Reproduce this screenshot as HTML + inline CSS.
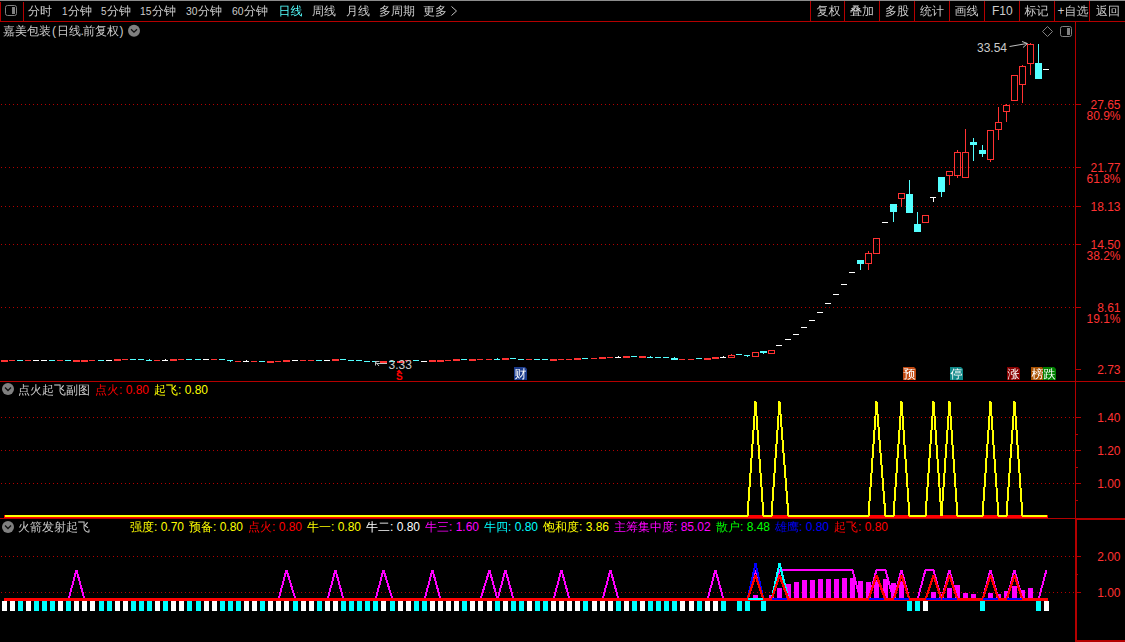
<!DOCTYPE html>
<html lang="zh-CN"><head><meta charset="utf-8"><title>嘉美包装</title>
<style>
html,body{margin:0;padding:0;background:#000;}
body{width:1125px;height:642px;overflow:hidden;}
svg{display:block;}
.t{font-family:"Liberation Sans","WenQuanYi Zen Hei","Noto Sans CJK SC",sans-serif;}
.n{font-family:"Liberation Sans",sans-serif;}
</style></head><body>
<svg width="1125" height="642" viewBox="0 0 1125 642" shape-rendering="crispEdges">
<rect x="0" y="0" width="1125" height="1" fill="#8c8c8c"/>
<rect x="0" y="21" width="1125" height="1" fill="#b40000"/>
<rect x="0" y="2" width="1" height="20" fill="#b40000"/>
<rect x="23" y="2" width="1" height="20" fill="#b40000"/>
<rect x="810" y="1" width="1" height="21" fill="#b40000"/>
<rect x="844" y="1" width="1" height="21" fill="#b40000"/>
<rect x="879" y="1" width="1" height="21" fill="#b40000"/>
<rect x="914" y="1" width="1" height="21" fill="#b40000"/>
<rect x="949" y="1" width="1" height="21" fill="#b40000"/>
<rect x="984" y="1" width="1" height="21" fill="#b40000"/>
<rect x="1019" y="1" width="1" height="21" fill="#b40000"/>
<rect x="1054" y="1" width="1" height="21" fill="#b40000"/>
<rect x="1089" y="1" width="1" height="21" fill="#b40000"/>
<rect x="1075" y="22" width="1" height="497" fill="#b40000"/>
<rect x="0" y="381" width="1125" height="1" fill="#b40000"/>
<rect x="0" y="518" width="1076" height="1" fill="#b40000"/>
<rect x="1075" y="518" width="50" height="2" fill="#b40000"/>
<rect x="1075" y="519" width="2" height="123" fill="#b40000"/>
<rect x="1075" y="640" width="50" height="2" fill="#b40000"/>
<path d="M1 104.5H1074" stroke="#b40000" stroke-width="1" stroke-dasharray="1 3" fill="none"/>
<path d="M1 167.5H1074" stroke="#b40000" stroke-width="1" stroke-dasharray="1 3" fill="none"/>
<path d="M1 206.5H1074" stroke="#b40000" stroke-width="1" stroke-dasharray="1 3" fill="none"/>
<path d="M1 244.5H1074" stroke="#b40000" stroke-width="1" stroke-dasharray="1 3" fill="none"/>
<path d="M1 307.5H1074" stroke="#b40000" stroke-width="1" stroke-dasharray="1 3" fill="none"/>
<path d="M1 417.5H1074" stroke="#b40000" stroke-width="1" stroke-dasharray="1 3" fill="none"/>
<path d="M1 450.5H1074" stroke="#b40000" stroke-width="1" stroke-dasharray="1 3" fill="none"/>
<path d="M1 483.5H1074" stroke="#b40000" stroke-width="1" stroke-dasharray="1 3" fill="none"/>
<path d="M1 556.5H1074" stroke="#b40000" stroke-width="1" stroke-dasharray="1 3" fill="none"/>
<path d="M1 592.5H1074" stroke="#b40000" stroke-width="1" stroke-dasharray="1 3" fill="none"/>
<rect x="1076" y="104" width="5" height="1" fill="#b40000"/>
<rect x="1076" y="167" width="5" height="1" fill="#b40000"/>
<rect x="1076" y="206" width="5" height="1" fill="#b40000"/>
<rect x="1076" y="244" width="5" height="1" fill="#b40000"/>
<rect x="1076" y="307" width="5" height="1" fill="#b40000"/>
<rect x="1076" y="369" width="5" height="1" fill="#b40000"/>
<rect x="1076" y="417" width="5" height="1" fill="#b40000"/>
<rect x="1076" y="450" width="5" height="1" fill="#b40000"/>
<rect x="1076" y="483" width="5" height="1" fill="#b40000"/>
<rect x="1076" y="434" width="2" height="1" fill="#b40000"/>
<rect x="1076" y="467" width="2" height="1" fill="#b40000"/>
<rect x="1076" y="500" width="2" height="1" fill="#b40000"/>
<rect x="1077" y="556" width="4" height="1" fill="#b40000"/>
<rect x="1077" y="592" width="4" height="1" fill="#b40000"/>
<rect x="1077" y="574" width="1" height="1" fill="#b40000"/>
<rect x="1" y="360" width="7" height="2" fill="#ff3232"/>
<rect x="9" y="360" width="6" height="1" fill="#ff3232"/>
<rect x="17" y="360" width="6" height="1" fill="#54ffff"/>
<rect x="25" y="360" width="6" height="1" fill="#ff3232"/>
<rect x="33" y="360" width="6" height="1" fill="#ffffff"/>
<rect x="41" y="360" width="6" height="1" fill="#ffffff"/>
<rect x="49" y="360" width="6" height="1" fill="#54ffff"/>
<rect x="57" y="360" width="6" height="1" fill="#ff3232"/>
<rect x="65" y="360" width="6" height="1" fill="#54ffff"/>
<rect x="73" y="360" width="7" height="2" fill="#ff3232"/>
<rect x="81" y="360" width="7" height="2" fill="#ff3232"/>
<rect x="89" y="360" width="6" height="1" fill="#ff3232"/>
<rect x="98" y="360" width="6" height="1" fill="#54ffff"/>
<rect x="106" y="360" width="6" height="1" fill="#ffffff"/>
<rect x="114" y="359" width="7" height="2" fill="#ff3232"/>
<rect x="122" y="359" width="6" height="1" fill="#ff3232"/>
<rect x="130" y="359" width="6" height="1" fill="#54ffff"/>
<rect x="138" y="359" width="6" height="1" fill="#54ffff"/>
<rect x="146" y="360" width="6" height="1" fill="#54ffff"/>
<rect x="149" y="359" width="1" height="1" fill="#54ffff"/>
<rect x="154" y="360" width="6" height="1" fill="#ff3232"/>
<rect x="162" y="360" width="6" height="1" fill="#ffffff"/>
<rect x="165" y="359" width="1" height="1" fill="#ffffff"/>
<rect x="170" y="359" width="7" height="2" fill="#ff3232"/>
<rect x="178" y="359" width="6" height="1" fill="#ff3232"/>
<rect x="186" y="359" width="6" height="1" fill="#54ffff"/>
<rect x="195" y="359" width="6" height="1" fill="#54ffff"/>
<rect x="203" y="359" width="6" height="1" fill="#ffffff"/>
<rect x="211" y="359" width="6" height="1" fill="#ff3232"/>
<rect x="219" y="359" width="6" height="1" fill="#54ffff"/>
<rect x="227" y="360" width="6" height="1" fill="#54ffff"/>
<rect x="230" y="361" width="1" height="1" fill="#54ffff"/>
<rect x="235" y="361" width="6" height="1" fill="#ff3232"/>
<rect x="243" y="361" width="6" height="1" fill="#ffffff"/>
<rect x="246" y="360" width="1" height="1" fill="#ffffff"/>
<rect x="251" y="361" width="6" height="1" fill="#ff3232"/>
<rect x="259" y="361" width="6" height="1" fill="#54ffff"/>
<rect x="267" y="361" width="7" height="2" fill="#ff3232"/>
<rect x="275" y="361" width="6" height="1" fill="#ff3232"/>
<rect x="283" y="360" width="7" height="2" fill="#ff3232"/>
<rect x="292" y="360" width="6" height="1" fill="#ffffff"/>
<rect x="300" y="360" width="6" height="1" fill="#ff3232"/>
<rect x="308" y="360" width="6" height="1" fill="#ff3232"/>
<rect x="316" y="360" width="6" height="1" fill="#54ffff"/>
<rect x="324" y="360" width="6" height="1" fill="#ffffff"/>
<rect x="332" y="359" width="7" height="2" fill="#ff3232"/>
<rect x="340" y="359" width="6" height="1" fill="#54ffff"/>
<rect x="348" y="360" width="6" height="1" fill="#54ffff"/>
<rect x="356" y="360" width="6" height="1" fill="#54ffff"/>
<rect x="364" y="361" width="6" height="1" fill="#54ffff"/>
<rect x="372" y="361" width="6" height="1" fill="#54ffff"/>
<rect x="380" y="361" width="7" height="2" fill="#ff3232"/>
<rect x="389" y="361" width="6" height="1" fill="#54ffff"/>
<rect x="397" y="361" width="7" height="2" fill="#ff3232"/>
<rect x="405" y="360" width="6" height="1" fill="#ff3232"/>
<rect x="413" y="360" width="6" height="1" fill="#54ffff"/>
<rect x="421" y="361" width="6" height="1" fill="#ffffff"/>
<rect x="429" y="360" width="7" height="2" fill="#ff3232"/>
<rect x="437" y="360" width="7" height="2" fill="#ff3232"/>
<rect x="445" y="360" width="6" height="1" fill="#ff3232"/>
<rect x="453" y="359" width="7" height="2" fill="#ff3232"/>
<rect x="461" y="359" width="6" height="1" fill="#54ffff"/>
<rect x="469" y="359" width="7" height="2" fill="#ff3232"/>
<rect x="477" y="359" width="6" height="1" fill="#ff3232"/>
<rect x="486" y="359" width="6" height="1" fill="#ff3232"/>
<rect x="494" y="359" width="6" height="1" fill="#54ffff"/>
<rect x="497" y="358" width="1" height="1" fill="#54ffff"/>
<rect x="502" y="358" width="7" height="2" fill="#ff3232"/>
<rect x="510" y="358" width="6" height="1" fill="#54ffff"/>
<rect x="518" y="359" width="6" height="1" fill="#54ffff"/>
<rect x="526" y="359" width="6" height="1" fill="#ff3232"/>
<rect x="534" y="359" width="6" height="1" fill="#54ffff"/>
<rect x="542" y="359" width="6" height="1" fill="#54ffff"/>
<rect x="550" y="359" width="7" height="2" fill="#ff3232"/>
<rect x="558" y="359" width="6" height="1" fill="#ff3232"/>
<rect x="566" y="359" width="6" height="1" fill="#ff3232"/>
<rect x="574" y="358" width="7" height="2" fill="#ff3232"/>
<rect x="582" y="358" width="6" height="1" fill="#54ffff"/>
<rect x="591" y="358" width="6" height="1" fill="#ff3232"/>
<rect x="599" y="357" width="7" height="2" fill="#ff3232"/>
<rect x="607" y="357" width="6" height="1" fill="#ff3232"/>
<rect x="615" y="357" width="6" height="1" fill="#ffffff"/>
<rect x="618" y="356" width="1" height="1" fill="#ffffff"/>
<rect x="623" y="356" width="7" height="2" fill="#ff3232"/>
<rect x="631" y="356" width="6" height="1" fill="#54ffff"/>
<rect x="639" y="356" width="7" height="2" fill="#ff3232"/>
<rect x="647" y="357" width="6" height="1" fill="#54ffff"/>
<rect x="650" y="356" width="1" height="1" fill="#54ffff"/>
<rect x="655" y="357" width="6" height="1" fill="#54ffff"/>
<rect x="663" y="357" width="6" height="1" fill="#54ffff"/>
<rect x="671" y="358" width="7" height="2" fill="#54ffff"/>
<rect x="674" y="357" width="1" height="1" fill="#54ffff"/>
<rect x="679" y="359" width="6" height="1" fill="#ff3232"/>
<rect x="688" y="359" width="6" height="1" fill="#ff3232"/>
<rect x="696" y="358" width="6" height="1" fill="#54ffff"/>
<rect x="704" y="358" width="7" height="2" fill="#ff3232"/>
<rect x="712" y="357" width="7" height="2" fill="#ff3232"/>
<rect x="720" y="357" width="6" height="1" fill="#ffffff"/>
<rect x="723" y="356" width="1" height="1" fill="#ffffff"/>
<rect x="736" y="354" width="6" height="1" fill="#54ffff"/>
<rect x="744" y="355" width="6" height="1" fill="#54ffff"/>
<rect x="747" y="356" width="1" height="1" fill="#54ffff"/>
<rect x="760" y="351" width="7" height="2" fill="#54ffff"/>
<rect x="763" y="353" width="1" height="1" fill="#54ffff"/>
<rect x="776" y="345" width="6" height="1" fill="#ffffff"/>
<rect x="785" y="339" width="6" height="1" fill="#ffffff"/>
<rect x="793" y="334" width="6" height="1" fill="#ffffff"/>
<rect x="801" y="327" width="6" height="1" fill="#ffffff"/>
<rect x="809" y="320" width="6" height="1" fill="#ffffff"/>
<rect x="817" y="312" width="6" height="1" fill="#ffffff"/>
<rect x="825" y="303" width="6" height="1" fill="#ffffff"/>
<rect x="833" y="294" width="6" height="1" fill="#ffffff"/>
<rect x="841" y="284" width="6" height="1" fill="#ffffff"/>
<rect x="849" y="272" width="6" height="1" fill="#ffffff"/>
<rect x="882" y="222" width="6" height="1" fill="#ffffff"/>
<rect x="1043" y="69" width="6" height="1" fill="#ffffff"/>
<rect x="731" y="354" width="1" height="1" fill="#ff3232"/>
<rect x="728.5" y="355.5" width="6" height="2" fill="none" stroke="#ff3232" stroke-width="1"/>
<rect x="752.5" y="352.5" width="6" height="4" fill="none" stroke="#ff3232" stroke-width="1"/>
<rect x="768.5" y="350.5" width="6" height="3" fill="none" stroke="#ff3232" stroke-width="1"/>
<rect x="860" y="260" width="1" height="10" fill="#54ffff"/>
<rect x="857" y="260" width="7" height="4" fill="#54ffff"/>
<rect x="868" y="251" width="1" height="2" fill="#ff3232"/>
<rect x="868" y="264" width="1" height="6" fill="#ff3232"/>
<rect x="865.5" y="253.5" width="6" height="10" fill="none" stroke="#ff3232" stroke-width="1"/>
<rect x="873.5" y="238.5" width="6" height="15" fill="none" stroke="#ff3232" stroke-width="1"/>
<rect x="893" y="204" width="1" height="18" fill="#54ffff"/>
<rect x="890" y="204" width="7" height="8" fill="#54ffff"/>
<rect x="901" y="199" width="1" height="8" fill="#ff3232"/>
<rect x="898.5" y="193.5" width="6" height="5" fill="none" stroke="#ff3232" stroke-width="1"/>
<rect x="909" y="180" width="1" height="33" fill="#54ffff"/>
<rect x="906" y="194" width="7" height="19" fill="#54ffff"/>
<rect x="917" y="212" width="1" height="20" fill="#54ffff"/>
<rect x="914" y="224" width="7" height="8" fill="#54ffff"/>
<rect x="922.5" y="215.5" width="6" height="7" fill="none" stroke="#ff3232" stroke-width="1"/>
<rect x="941" y="177" width="1" height="20" fill="#54ffff"/>
<rect x="938" y="177" width="7" height="15" fill="#54ffff"/>
<rect x="949" y="176" width="1" height="9" fill="#ff3232"/>
<rect x="946.5" y="171.5" width="6" height="4" fill="none" stroke="#ff3232" stroke-width="1"/>
<rect x="957" y="150" width="1" height="2" fill="#ff3232"/>
<rect x="957" y="176" width="1" height="2" fill="#ff3232"/>
<rect x="954.5" y="152.5" width="6" height="23" fill="none" stroke="#ff3232" stroke-width="1"/>
<rect x="965" y="129" width="1" height="23" fill="#ff3232"/>
<rect x="962.5" y="152.5" width="6" height="25" fill="none" stroke="#ff3232" stroke-width="1"/>
<rect x="973" y="138" width="1" height="23" fill="#54ffff"/>
<rect x="970" y="142" width="7" height="3" fill="#54ffff"/>
<rect x="982" y="145" width="1" height="12" fill="#54ffff"/>
<rect x="979" y="150" width="7" height="4" fill="#54ffff"/>
<rect x="990" y="160" width="1" height="2" fill="#ff3232"/>
<rect x="987.5" y="130.5" width="6" height="29" fill="none" stroke="#ff3232" stroke-width="1"/>
<rect x="998" y="107" width="1" height="15" fill="#ff3232"/>
<rect x="998" y="130" width="1" height="10" fill="#ff3232"/>
<rect x="995.5" y="122.5" width="6" height="7" fill="none" stroke="#ff3232" stroke-width="1"/>
<rect x="1006" y="104" width="1" height="1" fill="#ff3232"/>
<rect x="1006" y="112" width="1" height="10" fill="#ff3232"/>
<rect x="1003.5" y="105.5" width="6" height="6" fill="none" stroke="#ff3232" stroke-width="1"/>
<rect x="1011.5" y="75.5" width="6" height="25" fill="none" stroke="#ff3232" stroke-width="1"/>
<rect x="1022" y="65" width="1" height="1" fill="#ff3232"/>
<rect x="1022" y="85" width="1" height="18" fill="#ff3232"/>
<rect x="1019.5" y="66.5" width="6" height="18" fill="none" stroke="#ff3232" stroke-width="1"/>
<rect x="1030" y="43" width="1" height="1" fill="#ff3232"/>
<rect x="1030" y="64" width="1" height="11" fill="#ff3232"/>
<rect x="1027.5" y="44.5" width="6" height="19" fill="none" stroke="#ff3232" stroke-width="1"/>
<rect x="1038" y="44" width="1" height="35" fill="#54ffff"/>
<rect x="1035" y="63" width="7" height="16" fill="#54ffff"/>
<rect x="930" y="197" width="6" height="1" fill="#ffffff"/>
<rect x="933" y="197" width="1" height="5" fill="#ffffff"/>
<rect x="4" y="515" width="1044" height="3" fill="#ff0000"/>
<path d="M4.5 516 L12.5 516 L20.5 516 L28.5 516 L36.5 516 L44.5 516 L52.5 516 L60.5 516 L68.5 516 L76.5 516 L84.5 516 L92.5 516 L101.5 516 L109.5 516 L117.5 516 L125.5 516 L133.5 516 L141.5 516 L149.5 516 L157.5 516 L165.5 516 L173.5 516 L181.5 516 L189.5 516 L198.5 516 L206.5 516 L214.5 516 L222.5 516 L230.5 516 L238.5 516 L246.5 516 L254.5 516 L262.5 516 L270.5 516 L278.5 516 L286.5 516 L295.5 516 L303.5 516 L311.5 516 L319.5 516 L327.5 516 L335.5 516 L343.5 516 L351.5 516 L359.5 516 L367.5 516 L375.5 516 L383.5 516 L392.5 516 L400.5 516 L408.5 516 L416.5 516 L424.5 516 L432.5 516 L440.5 516 L448.5 516 L456.5 516 L464.5 516 L472.5 516 L480.5 516 L489.5 516 L497.5 516 L505.5 516 L513.5 516 L521.5 516 L529.5 516 L537.5 516 L545.5 516 L553.5 516 L561.5 516 L569.5 516 L577.5 516 L585.5 516 L594.5 516 L602.5 516 L610.5 516 L618.5 516 L626.5 516 L634.5 516 L642.5 516 L650.5 516 L658.5 516 L666.5 516 L674.5 516 L682.5 516 L691.5 516 L699.5 516 L707.5 516 L715.5 516 L723.5 516 L731.5 516 L739.5 516 L747.5 516 L755.5 401.5 L763.5 516 L771.5 516 L779.5 401.5 L788.5 516 L796.5 516 L804.5 516 L812.5 516 L820.5 516 L828.5 516 L836.5 516 L844.5 516 L852.5 516 L860.5 516 L868.5 516 L876.5 401.5 L885.5 516 L893.5 516 L901.5 401.5 L909.5 516 L917.5 516 L925.5 516 L933.5 401.5 L941.5 516 L949.5 401.5 L957.5 516 L965.5 516 L973.5 516 L982.5 516 L990.5 401.5 L998.5 516 L1006.5 516 L1014.5 401.5 L1022.5 516 L1030.5 516 L1038.5 516 L1046.5 516" stroke="#ffff00" stroke-width="2" fill="none" stroke-linejoin="miter" shape-rendering="crispEdges"/>
<rect x="2" y="601" width="5" height="10" fill="#ffffff"/>
<rect x="10" y="601" width="5" height="10" fill="#ffffff"/>
<rect x="18" y="601" width="5" height="10" fill="#00ffff"/>
<rect x="26" y="601" width="5" height="10" fill="#ffffff"/>
<rect x="34" y="601" width="5" height="10" fill="#00ffff"/>
<rect x="42" y="601" width="5" height="10" fill="#00ffff"/>
<rect x="50" y="601" width="5" height="10" fill="#00ffff"/>
<rect x="58" y="601" width="5" height="10" fill="#ffffff"/>
<rect x="66" y="601" width="5" height="10" fill="#00ffff"/>
<rect x="74" y="601" width="5" height="10" fill="#ffffff"/>
<rect x="82" y="601" width="5" height="10" fill="#ffffff"/>
<rect x="90" y="601" width="5" height="10" fill="#ffffff"/>
<rect x="99" y="601" width="5" height="10" fill="#00ffff"/>
<rect x="107" y="601" width="5" height="10" fill="#00ffff"/>
<rect x="115" y="601" width="5" height="10" fill="#ffffff"/>
<rect x="123" y="601" width="5" height="10" fill="#ffffff"/>
<rect x="131" y="601" width="5" height="10" fill="#00ffff"/>
<rect x="139" y="601" width="5" height="10" fill="#00ffff"/>
<rect x="147" y="601" width="5" height="10" fill="#00ffff"/>
<rect x="155" y="601" width="5" height="10" fill="#ffffff"/>
<rect x="163" y="601" width="5" height="10" fill="#00ffff"/>
<rect x="171" y="601" width="5" height="10" fill="#ffffff"/>
<rect x="179" y="601" width="5" height="10" fill="#ffffff"/>
<rect x="187" y="601" width="5" height="10" fill="#00ffff"/>
<rect x="196" y="601" width="5" height="10" fill="#00ffff"/>
<rect x="204" y="601" width="5" height="10" fill="#ffffff"/>
<rect x="212" y="601" width="5" height="10" fill="#ffffff"/>
<rect x="220" y="601" width="5" height="10" fill="#00ffff"/>
<rect x="228" y="601" width="5" height="10" fill="#00ffff"/>
<rect x="236" y="601" width="5" height="10" fill="#00ffff"/>
<rect x="244" y="601" width="5" height="10" fill="#ffffff"/>
<rect x="252" y="601" width="5" height="10" fill="#ffffff"/>
<rect x="260" y="601" width="5" height="10" fill="#00ffff"/>
<rect x="268" y="601" width="5" height="10" fill="#ffffff"/>
<rect x="276" y="601" width="5" height="10" fill="#ffffff"/>
<rect x="284" y="601" width="5" height="10" fill="#ffffff"/>
<rect x="293" y="601" width="5" height="10" fill="#00ffff"/>
<rect x="301" y="601" width="5" height="10" fill="#ffffff"/>
<rect x="309" y="601" width="5" height="10" fill="#ffffff"/>
<rect x="317" y="601" width="5" height="10" fill="#00ffff"/>
<rect x="325" y="601" width="5" height="10" fill="#ffffff"/>
<rect x="333" y="601" width="5" height="10" fill="#ffffff"/>
<rect x="341" y="601" width="5" height="10" fill="#00ffff"/>
<rect x="349" y="601" width="5" height="10" fill="#00ffff"/>
<rect x="357" y="601" width="5" height="10" fill="#00ffff"/>
<rect x="365" y="601" width="5" height="10" fill="#00ffff"/>
<rect x="373" y="601" width="5" height="10" fill="#00ffff"/>
<rect x="381" y="601" width="5" height="10" fill="#ffffff"/>
<rect x="390" y="601" width="5" height="10" fill="#00ffff"/>
<rect x="398" y="601" width="5" height="10" fill="#ffffff"/>
<rect x="406" y="601" width="5" height="10" fill="#ffffff"/>
<rect x="414" y="601" width="5" height="10" fill="#00ffff"/>
<rect x="422" y="601" width="5" height="10" fill="#00ffff"/>
<rect x="430" y="601" width="5" height="10" fill="#ffffff"/>
<rect x="438" y="601" width="5" height="10" fill="#ffffff"/>
<rect x="446" y="601" width="5" height="10" fill="#ffffff"/>
<rect x="454" y="601" width="5" height="10" fill="#ffffff"/>
<rect x="462" y="601" width="5" height="10" fill="#00ffff"/>
<rect x="470" y="601" width="5" height="10" fill="#ffffff"/>
<rect x="478" y="601" width="5" height="10" fill="#ffffff"/>
<rect x="487" y="601" width="5" height="10" fill="#ffffff"/>
<rect x="495" y="601" width="5" height="10" fill="#00ffff"/>
<rect x="503" y="601" width="5" height="10" fill="#ffffff"/>
<rect x="511" y="601" width="5" height="10" fill="#00ffff"/>
<rect x="519" y="601" width="5" height="10" fill="#00ffff"/>
<rect x="527" y="601" width="5" height="10" fill="#ffffff"/>
<rect x="535" y="601" width="5" height="10" fill="#00ffff"/>
<rect x="543" y="601" width="5" height="10" fill="#00ffff"/>
<rect x="551" y="601" width="5" height="10" fill="#ffffff"/>
<rect x="559" y="601" width="5" height="10" fill="#ffffff"/>
<rect x="567" y="601" width="5" height="10" fill="#ffffff"/>
<rect x="575" y="601" width="5" height="10" fill="#ffffff"/>
<rect x="583" y="601" width="5" height="10" fill="#00ffff"/>
<rect x="592" y="601" width="5" height="10" fill="#ffffff"/>
<rect x="600" y="601" width="5" height="10" fill="#ffffff"/>
<rect x="608" y="601" width="5" height="10" fill="#ffffff"/>
<rect x="616" y="601" width="5" height="10" fill="#00ffff"/>
<rect x="624" y="601" width="5" height="10" fill="#ffffff"/>
<rect x="632" y="601" width="5" height="10" fill="#00ffff"/>
<rect x="640" y="601" width="5" height="10" fill="#ffffff"/>
<rect x="648" y="601" width="5" height="10" fill="#00ffff"/>
<rect x="656" y="601" width="5" height="10" fill="#00ffff"/>
<rect x="664" y="601" width="5" height="10" fill="#00ffff"/>
<rect x="672" y="601" width="5" height="10" fill="#00ffff"/>
<rect x="680" y="601" width="5" height="10" fill="#ffffff"/>
<rect x="689" y="601" width="5" height="10" fill="#ffffff"/>
<rect x="697" y="601" width="5" height="10" fill="#00ffff"/>
<rect x="705" y="601" width="5" height="10" fill="#ffffff"/>
<rect x="713" y="601" width="5" height="10" fill="#ffffff"/>
<rect x="721" y="601" width="5" height="10" fill="#00ffff"/>
<rect x="737" y="601" width="5" height="10" fill="#00ffff"/>
<rect x="745" y="601" width="5" height="10" fill="#00ffff"/>
<rect x="761" y="601" width="5" height="10" fill="#00ffff"/>
<rect x="907" y="601" width="5" height="10" fill="#00ffff"/>
<rect x="915" y="601" width="5" height="10" fill="#00ffff"/>
<rect x="923" y="601" width="5" height="10" fill="#ffffff"/>
<rect x="980" y="601" width="5" height="10" fill="#00ffff"/>
<rect x="1036" y="601" width="5" height="10" fill="#00ffff"/>
<rect x="1044" y="601" width="5" height="10" fill="#ffffff"/>
<rect x="753" y="595" width="5" height="4" fill="#ff00ff"/>
<rect x="769" y="595" width="5" height="4" fill="#ff00ff"/>
<rect x="777" y="588" width="5" height="11" fill="#ff00ff"/>
<rect x="786" y="584" width="5" height="15" fill="#ff00ff"/>
<rect x="794" y="582" width="5" height="17" fill="#ff00ff"/>
<rect x="802" y="580" width="5" height="19" fill="#ff00ff"/>
<rect x="810" y="580" width="5" height="19" fill="#ff00ff"/>
<rect x="818" y="579" width="5" height="20" fill="#ff00ff"/>
<rect x="826" y="579" width="5" height="20" fill="#ff00ff"/>
<rect x="834" y="579" width="5" height="20" fill="#ff00ff"/>
<rect x="842" y="578" width="5" height="21" fill="#ff00ff"/>
<rect x="850" y="578" width="5" height="21" fill="#ff00ff"/>
<rect x="858" y="581" width="5" height="18" fill="#ff00ff"/>
<rect x="866" y="582" width="5" height="17" fill="#ff00ff"/>
<rect x="874" y="580" width="5" height="19" fill="#ff00ff"/>
<rect x="883" y="579" width="5" height="20" fill="#ff00ff"/>
<rect x="891" y="583" width="5" height="16" fill="#ff00ff"/>
<rect x="899" y="581" width="5" height="18" fill="#ff00ff"/>
<rect x="931" y="592" width="5" height="7" fill="#ff00ff"/>
<rect x="939" y="594" width="5" height="5" fill="#ff00ff"/>
<rect x="947" y="588" width="5" height="11" fill="#ff00ff"/>
<rect x="955" y="585" width="5" height="14" fill="#ff00ff"/>
<rect x="963" y="593" width="5" height="6" fill="#ff00ff"/>
<rect x="971" y="594" width="5" height="5" fill="#ff00ff"/>
<rect x="988" y="593" width="5" height="6" fill="#ff00ff"/>
<rect x="996" y="594" width="5" height="5" fill="#ff00ff"/>
<rect x="1004" y="591" width="5" height="8" fill="#ff00ff"/>
<rect x="1012" y="586" width="5" height="13" fill="#ff00ff"/>
<rect x="1020" y="590" width="5" height="9" fill="#ff00ff"/>
<rect x="1028" y="588" width="5" height="11" fill="#ff00ff"/>
<path d="M4.5 599.5 L12.5 599.5 L20.5 599.5 L28.5 599.5 L36.5 599.5 L44.5 599.5 L52.5 599.5 L60.5 599.5 L68.5 599.5 L76.5 570.0 L84.5 599.5 L92.5 599.5 L101.5 599.5 L109.5 599.5 L117.5 599.5 L125.5 599.5 L133.5 599.5 L141.5 599.5 L149.5 599.5 L157.5 599.5 L165.5 599.5 L173.5 599.5 L181.5 599.5 L189.5 599.5 L198.5 599.5 L206.5 599.5 L214.5 599.5 L222.5 599.5 L230.5 599.5 L238.5 599.5 L246.5 599.5 L254.5 599.5 L262.5 599.5 L270.5 599.5 L278.5 599.5 L286.5 570.0 L295.5 599.5 L303.5 599.5 L311.5 599.5 L319.5 599.5 L327.5 599.5 L335.5 570.0 L343.5 599.5 L351.5 599.5 L359.5 599.5 L367.5 599.5 L375.5 599.5 L383.5 570.0 L392.5 599.5 L400.5 599.5 L408.5 599.5 L416.5 599.5 L424.5 599.5 L432.5 570.0 L440.5 599.5 L448.5 599.5 L456.5 599.5 L464.5 599.5 L472.5 599.5 L480.5 599.5 L489.5 570.0 L497.5 599.5 L505.5 570.0 L513.5 599.5 L521.5 599.5 L529.5 599.5 L537.5 599.5 L545.5 599.5 L553.5 599.5 L561.5 570.0 L569.5 599.5 L577.5 599.5 L585.5 599.5 L594.5 599.5 L602.5 599.5 L610.5 570.0 L618.5 599.5 L626.5 599.5 L634.5 599.5 L642.5 599.5 L650.5 599.5 L658.5 599.5 L666.5 599.5 L674.5 599.5 L682.5 599.5 L691.5 599.5 L699.5 599.5 L707.5 599.5 L715.5 570.0 L723.5 599.5 L731.5 599.5 L739.5 599.5 L747.5 599.5 L755.5 570.0 L763.5 599.5 L771.5 599.5 L779.5 570.0 L788.5 570.0 L796.5 570.0 L804.5 570.0 L812.5 570.0 L820.5 570.0 L828.5 570.0 L836.5 570.0 L844.5 570.0 L852.5 570.0 L860.5 599.5 L868.5 599.5 L876.5 570.0 L885.5 570.0 L893.5 599.5 L901.5 570.0 L909.5 599.5 L917.5 599.5 L925.5 570.0 L933.5 570.0 L941.5 599.5 L949.5 570.0 L957.5 599.5 L965.5 599.5 L973.5 599.5 L982.5 599.5 L990.5 570.0 L998.5 599.5 L1006.5 599.5 L1014.5 570.0 L1022.5 599.5 L1030.5 599.5 L1038.5 599.5 L1046.5 570.0" stroke="#ff00ff" stroke-width="2" fill="none" stroke-linejoin="bevel" shape-rendering="crispEdges"/>
<path d="M747.5 599.5 L755.5 563.5 L763.5 599.5" stroke="#0000ff" stroke-width="2" fill="none" stroke-linejoin="bevel" shape-rendering="crispEdges"/>
<path d="M771.5 599.5 L779.5 563.5 L788.5 599.5" stroke="#00ffff" stroke-width="2" fill="none" stroke-linejoin="bevel" shape-rendering="crispEdges"/>
<rect x="4" y="598" width="1044" height="3" fill="#ff0000"/>
<path d="M747.5 599.5 L755.5 575.5 L763.5 599.5" stroke="#ff0000" stroke-width="2.4" fill="none" stroke-linejoin="bevel" shape-rendering="crispEdges"/>
<path d="M771.5 599.5 L779.5 575.5 L788.5 599.5" stroke="#ff0000" stroke-width="2.4" fill="none" stroke-linejoin="bevel" shape-rendering="crispEdges"/>
<path d="M868.5 599.5 L876.5 575.5 L885.5 599.5" stroke="#ff0000" stroke-width="2.4" fill="none" stroke-linejoin="bevel" shape-rendering="crispEdges"/>
<path d="M893.5 599.5 L901.5 575.5 L909.5 599.5" stroke="#ff0000" stroke-width="2.4" fill="none" stroke-linejoin="bevel" shape-rendering="crispEdges"/>
<path d="M925.5 599.5 L933.5 575.5 L941.5 599.5" stroke="#ff0000" stroke-width="2.4" fill="none" stroke-linejoin="bevel" shape-rendering="crispEdges"/>
<path d="M941.5 599.5 L949.5 575.5 L957.5 599.5" stroke="#ff0000" stroke-width="2.4" fill="none" stroke-linejoin="bevel" shape-rendering="crispEdges"/>
<path d="M982.5 599.5 L990.5 575.5 L998.5 599.5" stroke="#ff0000" stroke-width="2.4" fill="none" stroke-linejoin="bevel" shape-rendering="crispEdges"/>
<path d="M1006.5 599.5 L1014.5 575.5 L1022.5 599.5" stroke="#ff0000" stroke-width="2.4" fill="none" stroke-linejoin="bevel" shape-rendering="crispEdges"/>
<rect x="748" y="598" width="15" height="2" fill="#00ffff"/>
<rect x="772" y="598" width="15" height="2" fill="#0000ff"/>
<rect x="869" y="598" width="15" height="2" fill="#0000ff"/>
<rect x="894" y="598" width="15" height="2" fill="#0000ff"/>
<rect x="926" y="598" width="15" height="2" fill="#0000ff"/>
<rect x="942" y="598" width="15" height="2" fill="#0000ff"/>
<rect x="983" y="598" width="15" height="2" fill="#0000ff"/>
<rect x="1007" y="598" width="15" height="2" fill="#0000ff"/>
<g shape-rendering="auto">
<text x="28" y="14.5" fill="#cccccc" font-size="12" text-anchor="start" class="t">分时</text>
<text x="62" y="14.5" fill="#cccccc" font-size="11" text-anchor="start" class="n" textLength="5.5" lengthAdjust="spacingAndGlyphs">1</text>
<text x="68" y="14.5" fill="#cccccc" font-size="12" text-anchor="start" class="t">分钟</text>
<text x="101" y="14.5" fill="#cccccc" font-size="11" text-anchor="start" class="n" textLength="5.5" lengthAdjust="spacingAndGlyphs">5</text>
<text x="107" y="14.5" fill="#cccccc" font-size="12" text-anchor="start" class="t">分钟</text>
<text x="140" y="14.5" fill="#cccccc" font-size="11" text-anchor="start" class="n" textLength="11.5" lengthAdjust="spacingAndGlyphs">15</text>
<text x="152" y="14.5" fill="#cccccc" font-size="12" text-anchor="start" class="t">分钟</text>
<text x="186" y="14.5" fill="#cccccc" font-size="11" text-anchor="start" class="n" textLength="11.5" lengthAdjust="spacingAndGlyphs">30</text>
<text x="198" y="14.5" fill="#cccccc" font-size="12" text-anchor="start" class="t">分钟</text>
<text x="232" y="14.5" fill="#cccccc" font-size="11" text-anchor="start" class="n" textLength="11.5" lengthAdjust="spacingAndGlyphs">60</text>
<text x="244" y="14.5" fill="#cccccc" font-size="12" text-anchor="start" class="t">分钟</text>
<text x="278.5" y="14.5" fill="#54ffff" font-size="12" text-anchor="start" class="t">日线</text>
<text x="312" y="14.5" fill="#cccccc" font-size="12" text-anchor="start" class="t">周线</text>
<text x="346" y="14.5" fill="#cccccc" font-size="12" text-anchor="start" class="t">月线</text>
<text x="379" y="14.5" fill="#cccccc" font-size="12" text-anchor="start" class="t">多周期</text>
<text x="423" y="14.5" fill="#cccccc" font-size="12" text-anchor="start" class="t">更多</text>
<path d="M451.5 6.5L456.5 11L451.5 15.5" stroke="#c0c0c0" fill="none" stroke-width="1"/>
<text x="816.5" y="14.5" fill="#cccccc" font-size="12" text-anchor="start" class="t">复权</text>
<text x="850" y="14.5" fill="#cccccc" font-size="12" text-anchor="start" class="t">叠加</text>
<text x="885" y="14.5" fill="#cccccc" font-size="12" text-anchor="start" class="t">多股</text>
<text x="920" y="14.5" fill="#cccccc" font-size="12" text-anchor="start" class="t">统计</text>
<text x="954.5" y="14.5" fill="#cccccc" font-size="12" text-anchor="start" class="t">画线</text>
<text x="992" y="14.5" fill="#cccccc" font-size="12" text-anchor="start" class="t">F10</text>
<text x="1024.5" y="14.5" fill="#cccccc" font-size="12" text-anchor="start" class="t">标记</text>
<text x="1057.5" y="14.5" fill="#cccccc" font-size="12" text-anchor="start" class="t">+自选</text>
<text x="1096" y="14.5" fill="#cccccc" font-size="12" text-anchor="start" class="t">返回</text>
<rect x="5.5" y="5.5" width="11" height="10" rx="2" fill="none" stroke="#808080"/>
<rect x="12" y="7" width="3" height="7" fill="#808080"/>
<rect x="1060.5" y="26.5" width="11" height="10" rx="2" fill="none" stroke="#808080"/>
<rect x="1067" y="28" width="3" height="7" fill="#808080"/>
<path d="M1047.5 26.5L1052.5 31.5L1047.5 36.5L1042.5 31.5Z" fill="none" stroke="#808080"/>
<circle cx="134" cy="30.7" r="6" fill="#808080"/>
<path d="M131 29.2L134 32.2L137 29.2" stroke="#101010" stroke-width="1.3" fill="none"/>
<circle cx="8" cy="389" r="6" fill="#808080"/>
<path d="M5 387.5L8 390.5L11 387.5" stroke="#101010" stroke-width="1.3" fill="none"/>
<circle cx="8" cy="527" r="6" fill="#808080"/>
<path d="M5 525.5L8 528.5L11 525.5" stroke="#101010" stroke-width="1.3" fill="none"/>
<text x="3" y="34.5" fill="#cccccc" font-size="12" text-anchor="start" class="t">嘉美包装</text>
<text x="52" y="34.5" fill="#cccccc" font-size="12" text-anchor="start" class="t">(</text>
<text x="57" y="34.5" fill="#cccccc" font-size="12" text-anchor="start" class="t">日线</text>
<text x="80.5" y="34.5" fill="#cccccc" font-size="12" text-anchor="start" class="t">.</text>
<text x="83" y="34.5" fill="#cccccc" font-size="12" text-anchor="start" class="t">前复权</text>
<text x="119.5" y="34.5" fill="#cccccc" font-size="12" text-anchor="start" class="t">)</text>
<text x="1120.5" y="108.5" fill="#ff3232" font-size="12" text-anchor="end" class="n">27.65</text>
<text x="1120.5" y="119.5" fill="#ff3232" font-size="12" text-anchor="end" class="n">80.9%</text>
<text x="1120.5" y="171.5" fill="#ff3232" font-size="12" text-anchor="end" class="n">21.77</text>
<text x="1120.5" y="182.5" fill="#ff3232" font-size="12" text-anchor="end" class="n">61.8%</text>
<text x="1120.5" y="210.5" fill="#ff3232" font-size="12" text-anchor="end" class="n">18.13</text>
<text x="1120.5" y="248.5" fill="#ff3232" font-size="12" text-anchor="end" class="n">14.50</text>
<text x="1120.5" y="259.5" fill="#ff3232" font-size="12" text-anchor="end" class="n">38.2%</text>
<text x="1120.5" y="311.5" fill="#ff3232" font-size="12" text-anchor="end" class="n">8.61</text>
<text x="1120.5" y="322.5" fill="#ff3232" font-size="12" text-anchor="end" class="n">19.1%</text>
<text x="1120.5" y="374" fill="#ff3232" font-size="12" text-anchor="end" class="n">2.73</text>
<text x="1120.5" y="422" fill="#ff3232" font-size="12" text-anchor="end" class="n">1.40</text>
<text x="1120.5" y="455" fill="#ff3232" font-size="12" text-anchor="end" class="n">1.20</text>
<text x="1120.5" y="488" fill="#ff3232" font-size="12" text-anchor="end" class="n">1.00</text>
<text x="1120.5" y="561" fill="#ff3232" font-size="12" text-anchor="end" class="n">2.00</text>
<text x="1120.5" y="597" fill="#ff3232" font-size="12" text-anchor="end" class="n">1.00</text>
<text x="977" y="52" fill="#cccccc" font-size="12" text-anchor="start" class="n">33.54</text>
<path d="M1009.5 46.5L1027 43.5M1022 41.5L1027.5 43.5L1023 47.5" stroke="#c0c0c0" fill="none" stroke-width="1"/>
<text x="388.5" y="369" fill="#cccccc" font-size="12" text-anchor="start" class="n">3.33</text>
<path d="M387 363.5H376.5M375.5 361.5V365.5M375.5 361.5H379.5M375.5 362L379 366" stroke="#c0c0c0" fill="none" stroke-width="1"/>
<path d="M396.5 372L399 369.5L401.5 372Z" fill="#ff0000"/>
<text x="396" y="380" fill="#ff0000" font-size="10" text-anchor="start" class="n" font-weight="bold">S</text>
<path d="M514 367H525L527 369V380H514Z" fill="#1c3c8c"/>
<text x="514.5" y="378" fill="#ffffff" font-size="12" text-anchor="start" class="t">财</text>
<path d="M903 367H914L916 369V380H903Z" fill="#c04810"/>
<text x="903.5" y="378" fill="#ffffff" font-size="12" text-anchor="start" class="t">预</text>
<path d="M950 367H961L963 369V380H950Z" fill="#108888"/>
<text x="950.5" y="378" fill="#ffffff" font-size="12" text-anchor="start" class="t">停</text>
<path d="M1007 367H1018L1020 369V380H1007Z" fill="#880000"/>
<text x="1007.5" y="378" fill="#ffffff" font-size="12" text-anchor="start" class="t">涨</text>
<path d="M1031 367H1042L1044 369V380H1031Z" fill="#a85000"/>
<text x="1031.5" y="378" fill="#ffffff" font-size="12" text-anchor="start" class="t">榜</text>
<path d="M1043 367H1054L1056 369V380H1043Z" fill="#008000"/>
<text x="1043.5" y="378" fill="#ffffff" font-size="12" text-anchor="start" class="t">跌</text>
<text x="18" y="393.5" fill="#cccccc" font-size="12" text-anchor="start" class="t">点火起飞副图</text>
<text x="95" y="393.5" fill="#ff0000" font-size="12" text-anchor="start" class="t">点火</text>
<text x="119" y="393.5" fill="#ff0000" font-size="12" text-anchor="start" class="n">: 0.80</text>
<text x="154" y="393.5" fill="#ffff00" font-size="12" text-anchor="start" class="t">起飞</text>
<text x="178" y="393.5" fill="#ffff00" font-size="12" text-anchor="start" class="n">: 0.80</text>
<text x="18" y="531" fill="#cccccc" font-size="12" text-anchor="start" class="t">火箭发射起飞</text>
<text x="130" y="531" fill="#ffff00" font-size="12" text-anchor="start" class="t">强度</text>
<text x="154" y="531" fill="#ffff00" font-size="12" text-anchor="start" class="n">: 0.70</text>
<text x="189" y="531" fill="#ffff00" font-size="12" text-anchor="start" class="t">预备</text>
<text x="213" y="531" fill="#ffff00" font-size="12" text-anchor="start" class="n">: 0.80</text>
<text x="248" y="531" fill="#ff0000" font-size="12" text-anchor="start" class="t">点火</text>
<text x="272" y="531" fill="#ff0000" font-size="12" text-anchor="start" class="n">: 0.80</text>
<text x="307" y="531" fill="#ffff00" font-size="12" text-anchor="start" class="t">牛一</text>
<text x="331" y="531" fill="#ffff00" font-size="12" text-anchor="start" class="n">: 0.80</text>
<text x="366" y="531" fill="#ffffff" font-size="12" text-anchor="start" class="t">牛二</text>
<text x="390" y="531" fill="#ffffff" font-size="12" text-anchor="start" class="n">: 0.80</text>
<text x="425" y="531" fill="#ff00ff" font-size="12" text-anchor="start" class="t">牛三</text>
<text x="449" y="531" fill="#ff00ff" font-size="12" text-anchor="start" class="n">: 1.60</text>
<text x="484" y="531" fill="#00ffff" font-size="12" text-anchor="start" class="t">牛四</text>
<text x="508" y="531" fill="#00ffff" font-size="12" text-anchor="start" class="n">: 0.80</text>
<text x="543" y="531" fill="#ffff00" font-size="12" text-anchor="start" class="t">饱和度</text>
<text x="579" y="531" fill="#ffff00" font-size="12" text-anchor="start" class="n">: 3.86</text>
<text x="614" y="531" fill="#ff00ff" font-size="12" text-anchor="start" class="t">主筹集中度</text>
<text x="674" y="531" fill="#ff00ff" font-size="12" text-anchor="start" class="n">: 85.02</text>
<text x="716" y="531" fill="#00ff00" font-size="12" text-anchor="start" class="t">散户</text>
<text x="740" y="531" fill="#00ff00" font-size="12" text-anchor="start" class="n">: 8.48</text>
<text x="775" y="531" fill="#0000ff" font-size="12" text-anchor="start" class="t">雄鹰</text>
<text x="799" y="531" fill="#0000ff" font-size="12" text-anchor="start" class="n">: 0.80</text>
<text x="834" y="531" fill="#ff0000" font-size="12" text-anchor="start" class="t">起飞</text>
<text x="858" y="531" fill="#ff0000" font-size="12" text-anchor="start" class="n">: 0.80</text>
</g>
</svg>
</body></html>
